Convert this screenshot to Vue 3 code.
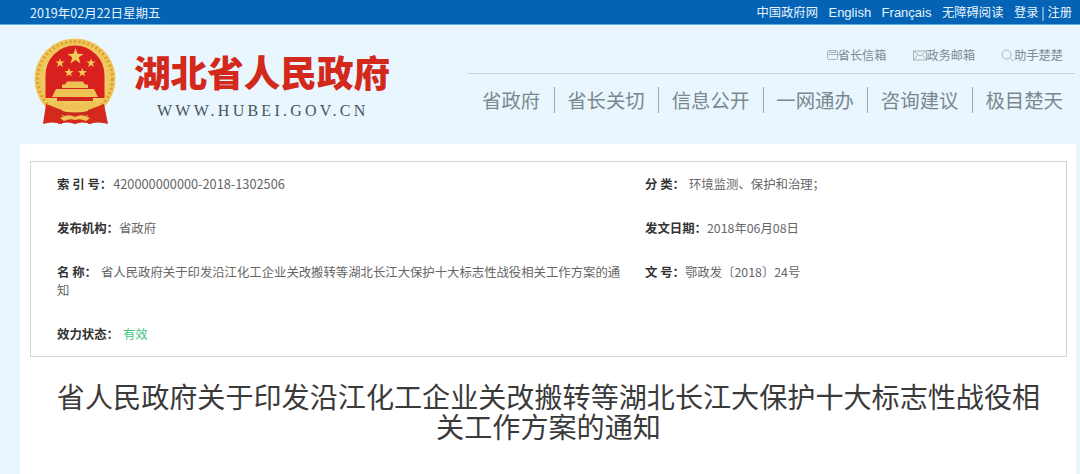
<script setup>
const topLinks = ['中国政府网', 'English', 'Français', '无障碍阅读']
const navItems = ['省政府', '省长关切', '信息公开', '一网通办', '咨询建议', '极目楚天']
const stars = [
  { x: 75.5, y: 56.5, r: 8.5 },
  { x: 60, y: 63, r: 4.8 },
  { x: 91, y: 63, r: 4.8 },
  { x: 69, y: 72.7, r: 4.8 },
  { x: 82.3, y: 72.7, r: 4.8 }
]
function starPoints(s) {
  const pts = []
  for (let i = 0; i < 10; i++) {
    const rad = i % 2 ? s.r * 0.4 : s.r
    const a = -Math.PI / 2 + (i * Math.PI) / 5
    pts.push(`${(s.x + rad * Math.cos(a)).toFixed(1)},${(s.y + rad * Math.sin(a)).toFixed(1)}`)
  }
  return pts.join(' ')
}
</script>

<template>
  <div class="page">
    <div class="topbar">
      <span class="date">2019年02月22日星期五</span>
      <div class="top-links">
        <a v-for="l in topLinks" :key="l">{{ l }}</a>
        <a>登录 | 注册</a>
      </div>
    </div>

    <header class="header">
      <div class="brand">
        <svg class="emblem" width="84" height="90" viewBox="33 37 84 90">
          <circle cx="75" cy="79" r="40.5" fill="#eec65c" />
          <circle cx="75" cy="79" r="37.5" fill="none" stroke="#d9a02c" stroke-width="3" stroke-dasharray="2 2.5" />
          <circle cx="75" cy="79" r="33" fill="#f0ca62" />
          <path d="M45.5 75 A29.5 29.5 0 0 1 104.5 75 L104.5 98 L45.5 98 Z" fill="#d8201f" />
          <polygon v-for="(s, i) in stars" :key="i" :points="starPoints(s)" fill="#f3cb58" />
          <path d="M62 88 V84.5 H65 L67 81.5 H83 L85 84.5 H88 V88 Z" fill="#eec255" />
          <path d="M52 97 L98 97 L94 89 L56 89 Z" fill="#eec255" />
          <path d="M57 98 H93 V101 H57 Z" fill="#c92a1d" />
          <path d="M46 104 L43 124 Q52 121 62 124 L62 110 Z" fill="#d42a1c" />
          <path d="M104 104 L108 124 Q98 121 88 124 L88 110 Z" fill="#d42a1c" />
          <path d="M55 109 Q75 116 95 109 L95 113 Q75 120 55 113 Z" fill="#c92a1d" />
          <path d="M53 103 Q62 99 68 105 Q75 101 82 105 Q88 99 97 103 L93 108 Q75 113 57 108 Z" fill="#eec255" />
          <path d="M58 118 Q68 112 75 116 Q82 112 92 118 L92 124 Q82 121 75 124 Q68 121 58 124 Z" fill="#d42a1c" />
          <path d="M60 118 Q68 113 75 117 Q82 113 90 118 L86 121 Q80 118 75 120 Q70 118 64 121 Z" fill="#eec255" />
        </svg>
        <div class="brand-text">
          <div class="brand-name">湖北省人民政府</div>
          <div class="brand-url">WWW.HUBEI.GOV.CN</div>
        </div>
      </div>
      <div class="header-right">
        <div class="tools">
          <span class="tool">
            <svg width="11" height="12" viewBox="0 0 11 12" fill="none" stroke="#a9b4bc" stroke-width="1">
              <rect x="0.5" y="1.5" width="10" height="9" rx="1.5" />
              <path d="M0.5 5.5 H10.5 M2.5 1.5 V3.5 H8.5 V1.5" />
            </svg>省长信箱
          </span>
          <span class="tool">
            <svg width="14" height="11" viewBox="0 0 14 11" fill="none" stroke="#a9b4bc" stroke-width="1">
              <rect x="0.5" y="1" width="13" height="9" />
              <path d="M0.5 1 L7 6 L13.5 1 M0.5 10 L5 4.5 M13.5 10 L9 4.5" />
            </svg>政务邮箱
          </span>
          <span class="tool">
            <svg width="13" height="13" viewBox="0 0 13 13" fill="none" stroke="#a9b4bc" stroke-width="1">
              <circle cx="5.5" cy="5.5" r="4.5" />
              <path d="M8.8 8.8 L12.5 12.5" />
            </svg>助手楚楚
          </span>
        </div>
        <nav class="nav">
          <a v-for="n in navItems" :key="n">{{ n }}</a>
        </nav>
      </div>
    </header>

    <main class="panel">
      <section class="card">
        <div class="cell"><b>索 引 号：</b><span class="num">420000000000-2018-1302506</span></div>
        <div class="cell"><b>分 类：</b><span class="indent">环境监测、保护和治理；</span></div>
        <div class="cell"><b>发布机构：</b><span>省政府</span></div>
        <div class="cell"><b>发文日期：</b><span>2018年06月08日</span></div>
        <div class="cell"><b>名 称：</b><span class="indent">省人民政府关于印发沿江化工企业关改搬转等湖北长江大保护十大标志性战役相关工作方案的通知</span></div>
        <div class="cell"><b>文 号：</b><span>鄂政发〔2018〕24号</span></div>
        <div class="cell"><b>效力状态：</b><span class="valid">有效</span></div>
      </section>
      <h1 class="title">省人民政府关于印发沿江化工企业关改搬转等湖北长江大保护十大标志性战役相关工作方案的通知</h1>
    </main>
  </div>
</template>

<style>
html, body {
  margin: 0;
  height: 100%;
  overflow: hidden;
  background: #e9f6fd;
}
</style>

<style scoped>
.page {
  height: 474px;
  display: flex;
  flex-direction: column;
  font-family: "Noto Sans CJK SC", "Liberation Sans", sans-serif;
  background: #e9f6fd;
}
.topbar {
  height: 24px;
  flex: none;
  border-bottom: 1px solid #5cb0e2;
  background: #0463b4;
  color: #e6f3fc;
  display: flex;
  justify-content: space-between;
  align-items: center;
  padding: 0 8px 0 30px;
  font-size: 12.3px;
}
.date {
  font-size: 12.5px;
}
.top-links {
  display: flex;
  align-items: baseline;
  gap: 10.5px;
}
.top-links a:nth-child(2),
.top-links a:nth-child(3) {
  font-family: "Liberation Sans", sans-serif;
  font-size: 13px;
}
.header {
  height: 119px;
  flex: none;
  display: flex;
  justify-content: space-between;
}
.brand {
  display: flex;
  padding: 12px 0 0 33px;
}
.emblem {
  flex: none;
}
.brand-text {
  margin-left: 17px;
  padding-top: 14px;
}
.brand-name {
  font-size: 36.6px;
  line-height: 42px;
  font-weight: 900;
  color: #d2291c;
  white-space: nowrap;
}
.brand-url {
  margin: 9px 0 0 23px;
  font-family: "Liberation Serif", serif;
  font-size: 16px;
  line-height: 18px;
  letter-spacing: 3.25px;
  color: #46545e;
  white-space: nowrap;
}
.header-right {
  width: 607px;
  margin-right: 5px;
}
.tools {
  height: 49px;
  box-sizing: border-box;
  border-bottom: 1px solid #c6d3da;
  display: flex;
  justify-content: flex-end;
  align-items: flex-end;
  padding: 0 12px 9px 0;
  gap: 26px;
  font-size: 12.2px;
  line-height: 18px;
  color: #7f8b93;
}
.tool {
  display: flex;
  align-items: center;
}
.nav {
  margin-top: 13px;
  display: flex;
  padding-left: 14px;
}
.nav a {
  font-size: 19.4px;
  line-height: 26px;
  color: #7b8790;
  padding-right: 13.5px;
  margin-right: 12.5px;
  border-right: 1px solid #9aa7af;
  white-space: nowrap;
}
.nav a:last-child {
  border-right: none;
  margin-right: 0;
  padding-right: 0;
}
.panel {
  flex: 1;
  margin: 0 4px 0 20px;
  background: #fff;
  padding: 17px 9px 0 10px;
}
.card {
  height: 196px;
  box-sizing: border-box;
  border: 1px solid #d4d4d4;
  padding: 13px 26px;
  display: grid;
  grid-template-columns: 570px 1fr;
  column-gap: 18px;
  row-gap: 26px;
  align-content: start;
  font-size: 12.36px;
  line-height: 18px;
  color: #666;
}
.cell b {
  color: #333;
  font-weight: 700;
  font-size: 12.4px;
}
.num {
  margin-left: 1px;
  font-size: 12.75px;
}
.indent {
  margin-left: 4px;
}
.valid {
  margin-left: 4px;
  color: #3fc47c;
}
.title {
  margin: 24px 24px 0;
  font-size: 28.1px;
  line-height: 30px;
  font-weight: 400;
  color: #3a3a3a;
  text-align: center;
}
</style>
